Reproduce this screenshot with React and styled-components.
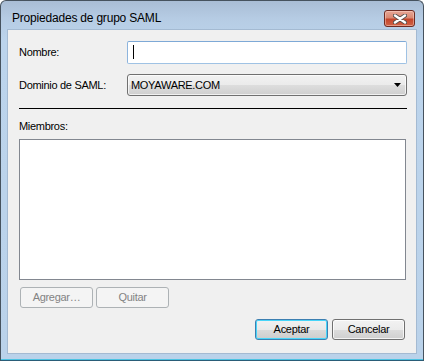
import React from "react";
import styled, { createGlobalStyle, css } from "styled-components";

const GlobalStyle = createGlobalStyle`
  html, body {
    margin: 0;
    padding: 0;
    background: #ffffff;
  }
  * {
    box-sizing: border-box;
  }
`;

const dialogFont = `"Tahoma", "Liberation Sans", Arial, sans-serif`;

const Window = styled.div`
  width: 424px;
  height: 361px;
  display: flex;
  flex-direction: column;
  border: 1px solid #46525e;
  border-bottom-color: #2a5d78;
  border-radius: 6px 6px 0 0;
  background: linear-gradient(#a9bdd5 0px, #b6cce4 18px, #bcd4ec 40px, #bad2ea 100%);
  box-shadow: inset 0 -1px 0 #4cc3e2;
  overflow: hidden;
`;

const TitleBar = styled.div`
  height: 28px;
  flex: none;
  display: flex;
  align-items: flex-start;
  justify-content: space-between;
  padding: 9px 8px 0 11px;
`;

const Title = styled.span`
  font-family: "Segoe UI", "Liberation Sans", Arial, sans-serif;
  font-size: 12px;
  letter-spacing: -0.2px;
  line-height: 17px;
  color: #000;
`;

const CloseButton = styled.div`
  width: 31px;
  height: 17px;
  border: 1px solid #6e2b22;
  border-radius: 3px;
  background: linear-gradient(#e7a696 0%, #d98872 45%, #c4452b 55%, #cf6346 100%);
  box-shadow: inset 0 0 0 1px rgba(255, 220, 210, 0.45);
  display: flex;
  align-items: center;
  justify-content: center;
`;

const ClientFrame = styled.div`
  flex: 1;
  margin: 0 6px 6px;
  border: 1px solid #a4bad2;
  background: #f0f0f0;
  display: flex;
  flex-direction: column;
  padding: 11px 9px 0 11px;
  font-family: ${dialogFont};
  font-size: 11px;
  letter-spacing: -0.3px;
  color: #000;
`;

const FieldRow = styled.div`
  display: grid;
  grid-template-columns: 108px 1fr;
  align-items: center;
  height: ${(p) => p.$h}px;
  margin-bottom: ${(p) => p.$gap}px;
`;

const Label = styled.span`
  line-height: 13px;
`;

const TextBox = styled.div`
  height: 100%;
  background: #fff;
  border: 1px solid #9fc2e4;
  border-top-color: #7ea9d6;
  border-left-color: #8db4dd;
  border-radius: 2px;
  padding: 3px 5px;
`;

const Caret = styled.div`
  width: 1px;
  height: 14px;
  background: #000;
`;

const ComboBox = styled.div`
  height: 100%;
  border: 1px solid #707070;
  border-radius: 3px;
  background: linear-gradient(#f2f2f2 0%, #ebebeb 50%, #dddddd 51%, #cfcfcf 100%);
  box-shadow: inset 0 0 0 1px rgba(255, 255, 255, 0.7);
  display: flex;
  align-items: center;
  justify-content: space-between;
  padding: 0 5px 0 3px;
`;

const Separator = styled.div`
  height: 1px;
  background: #000;
  margin: 0 0 11px;
`;

const SectionLabel = styled.div`
  line-height: 13px;
  height: 13px;
  margin-bottom: 6px;
`;

const ListBox = styled.div`
  height: 141px;
  margin-right: 1px;
  background: #fff;
  border: 1px solid #828790;
`;

const ButtonRow = styled.div`
  display: flex;
  gap: ${(p) => p.$gap}px;
  justify-content: ${(p) => (p.$end ? "flex-end" : "flex-start")};
  margin: ${(p) => p.$margin};
`;

const Button = styled.div`
  width: 73px;
  height: 21px;
  border: 1px solid #707070;
  border-radius: 3px;
  background: linear-gradient(#f2f2f2 0%, #ebebeb 50%, #dddddd 51%, #cfcfcf 100%);
  box-shadow: inset 0 0 0 1px rgba(255, 255, 255, 0.75);
  display: flex;
  align-items: center;
  justify-content: center;
  line-height: 13px;
  color: #000;

  ${(p) =>
    p.$disabled &&
    css`
      border-color: #adb2b5;
      background: #f4f4f4;
      box-shadow: none;
      color: #838383;
    `}

  ${(p) =>
    p.$default &&
    css`
      border-color: #3c7fb1;
      background: linear-gradient(#f1f1f1 0%, #e9e9e9 50%, #dbdbdb 51%, #cdcdcd 100%);
      box-shadow: inset 0 0 0 1px #48d5f9;
    `}
`;

const CloseGlyph = () => (
  <svg width="14" height="10" viewBox="0 0 14 10">
    <path d="M2 1.5 L12 8.5 M12 1.5 L2 8.5" stroke="#55504e" strokeWidth="4.2" strokeLinecap="round" />
    <path d="M2 1.5 L12 8.5 M12 1.5 L2 8.5" stroke="#ffffff" strokeWidth="2.4" strokeLinecap="round" />
  </svg>
);

const DropArrow = () => (
  <svg width="7" height="4" viewBox="0 0 7 4">
    <polygon points="0,0 7,0 3.5,4" fill="#000" />
  </svg>
);

export default function App() {
  return (
    <>
      <GlobalStyle />
      <Window>
        <TitleBar>
          <Title>Propiedades de grupo SAML</Title>
          <CloseButton>
            <CloseGlyph />
          </CloseButton>
        </TitleBar>
        <ClientFrame>
          <FieldRow $h={23} $gap={10}>
            <Label>Nombre:</Label>
            <TextBox>
              <Caret />
            </TextBox>
          </FieldRow>
          <FieldRow $h={22} $gap={12}>
            <Label>Dominio de SAML:</Label>
            <ComboBox>
              <span>MOYAWARE.COM</span>
              <DropArrow />
            </ComboBox>
          </FieldRow>
          <Separator />
          <SectionLabel>Miembros:</SectionLabel>
          <ListBox />
          <ButtonRow $gap={3} $margin="7px 0 0 1px">
            <Button $disabled>Agregar…</Button>
            <Button $disabled>Quitar</Button>
          </ButtonRow>
          <ButtonRow $gap={4} $end $margin="11px 2px 0 0">
            <Button $default>Aceptar</Button>
            <Button>Cancelar</Button>
          </ButtonRow>
        </ClientFrame>
      </Window>
    </>
  );
}
